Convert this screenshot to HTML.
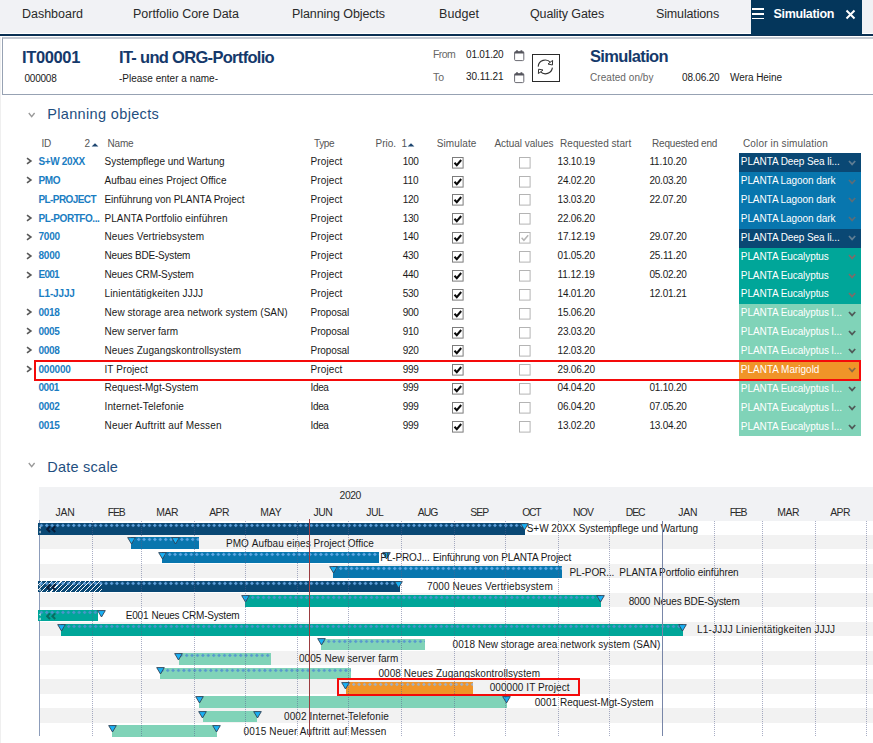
<!DOCTYPE html>
<html><head><meta charset="utf-8"><title>Simulation</title>
<style>
html,body{margin:0;padding:0;background:#fff;}
body{width:873px;height:743px;overflow:hidden;position:relative;font-family:"Liberation Sans",sans-serif;}
.t{position:absolute;white-space:nowrap;margin:0;padding:0;}
.r{position:absolute;margin:0;padding:0;display:block;}
</style></head><body>
<div class="r" style="left:0.00px;top:0.00px;width:873.00px;height:33.00px;background:#f1f2f5;"></div>
<div class="r" style="left:0.00px;top:34.00px;width:873.00px;height:2.00px;background:#0a3053;"></div>
<div class="t " style="left:22.00px;top:4.80px;font-size:12.5px;line-height:18px;color:#2a2a2a;letter-spacing:-0.017px;">Dashboard</div>
<div class="t " style="left:133.00px;top:4.80px;font-size:12.5px;line-height:18px;color:#2a2a2a;letter-spacing:-0.016px;">Portfolio Core Data</div>
<div class="t " style="left:292.00px;top:4.80px;font-size:12.5px;line-height:18px;color:#2a2a2a;letter-spacing:-0.094px;">Planning Objects</div>
<div class="t " style="left:439.00px;top:4.80px;font-size:12.5px;line-height:18px;color:#2a2a2a;letter-spacing:0.064px;">Budget</div>
<div class="t " style="left:530.00px;top:4.80px;font-size:12.5px;line-height:18px;color:#2a2a2a;letter-spacing:-0.133px;">Quality Gates</div>
<div class="t " style="left:656.00px;top:4.80px;font-size:12.5px;line-height:18px;color:#2a2a2a;letter-spacing:-0.147px;">Simulations</div>
<div class="r" style="left:750.60px;top:0.00px;width:111.40px;height:34.50px;background:#04365b;"></div>
<div class="r" style="left:751.50px;top:8.40px;width:12.50px;height:1.70px;background:#fff;"></div>
<div class="r" style="left:751.50px;top:13.00px;width:12.50px;height:1.70px;background:#fff;"></div>
<div class="r" style="left:751.50px;top:17.60px;width:12.50px;height:1.70px;background:#fff;"></div>
<div class="t " style="left:773.50px;top:4.80px;font-size:12.5px;line-height:18px;color:#fff;font-weight:bold;letter-spacing:-0.339px;">Simulation</div>
<svg class="r" style="left:845px;top:8.8px" width="11" height="11" viewBox="0 0 11 11"><path d="M1.5 1.5 L9.5 9.5 M9.5 1.5 L1.5 9.5" stroke="#fff" stroke-width="2" fill="none"/></svg>
<div class="r" style="left:0.00px;top:37.00px;width:1.00px;height:706.00px;background:#efefef;"></div>
<div class="r" style="left:2.00px;top:37.00px;width:873.00px;height:58.00px;background:#fff;border:1px solid #97a2b3;border-top:2px solid #c4c9d1;box-sizing:border-box;"></div>
<div class="t " style="left:22.00px;top:46.00px;font-size:16.5px;line-height:23px;color:#15396b;font-weight:bold;letter-spacing:-0.364px;">IT00001</div>
<div class="t " style="left:24.50px;top:72.00px;font-size:10px;line-height:14px;color:#1a1a1a;letter-spacing:-0.228px;">000008</div>
<div class="t " style="left:119.00px;top:46.00px;font-size:16.5px;line-height:23px;color:#15396b;font-weight:bold;letter-spacing:-0.693px;">IT- und ORG-Portfolio</div>
<div class="t " style="left:119.00px;top:72.00px;font-size:10px;line-height:14px;color:#1a1a1a;letter-spacing:0.003px;">-Please enter a name-</div>
<div class="t " style="left:433.00px;top:47.00px;font-size:10.5px;line-height:15px;color:#666;letter-spacing:-0.624px;">From</div>
<div class="t " style="left:433.00px;top:69.50px;font-size:10.5px;line-height:15px;color:#666;letter-spacing:-0.045px;">To</div>
<div class="t " style="left:466.00px;top:48.00px;font-size:10px;line-height:14px;color:#1a1a1a;letter-spacing:-0.178px;">01.01.20</div>
<div class="t " style="left:466.00px;top:69.60px;font-size:10px;line-height:14px;color:#1a1a1a;letter-spacing:-0.085px;">30.11.21</div>
<svg class="r" style="left:513.8px;top:49.6px" width="11" height="12" viewBox="0 0 11 12"><rect x="0.6" y="1.6" width="9.2" height="9" rx="1.2" fill="#fff" stroke="#6a6a72" stroke-width="1"/><path d="M0.6 2.6 H9.8" stroke="#55555d" stroke-width="1.8"/><path d="M3 0.3 V2 M7.4 0.3 V2" stroke="#55555d" stroke-width="1.8"/></svg>
<svg class="r" style="left:513.8px;top:71.6px" width="11" height="12" viewBox="0 0 11 12"><rect x="0.6" y="1.6" width="9.2" height="9" rx="1.2" fill="#fff" stroke="#6a6a72" stroke-width="1"/><path d="M0.6 2.6 H9.8" stroke="#55555d" stroke-width="1.8"/><path d="M3 0.3 V2 M7.4 0.3 V2" stroke="#55555d" stroke-width="1.8"/></svg>
<div class="r" style="left:532.00px;top:54.00px;width:28.00px;height:28.00px;background:#fff;border:1px solid #2a2a2a;box-sizing:border-box;"></div>
<svg class="r" style="left:536px;top:58px" width="20" height="20" viewBox="0 0 20 20"><path d="M2.2 8.6 A7 7 0 0 1 14.6 4.6" fill="none" stroke="#333" stroke-width="1.1"/><path d="M16.6 2.4 L16.4 7 L12 6 Z" fill="#fff" stroke="#333" stroke-width="1" stroke-linejoin="round"/><path d="M16.4 9.6 A7 7 0 0 1 4.4 13.6" fill="none" stroke="#333" stroke-width="1.1"/><path d="M2.4 15.6 L2.6 11.2 L7 12 Z" fill="#fff" stroke="#333" stroke-width="1" stroke-linejoin="round"/></svg>
<div class="t " style="left:590.00px;top:44.50px;font-size:16.5px;line-height:23px;color:#15396b;font-weight:bold;letter-spacing:-0.634px;">Simulation</div>
<div class="t " style="left:590.00px;top:71.00px;font-size:10px;line-height:14px;color:#666;letter-spacing:0.052px;">Created on/by</div>
<div class="t " style="left:682.00px;top:71.00px;font-size:10px;line-height:14px;color:#1a1a1a;letter-spacing:-0.178px;">08.06.20</div>
<div class="t " style="left:730.00px;top:71.00px;font-size:10px;line-height:14px;color:#1a1a1a;letter-spacing:-0.062px;">Wera Heine</div>
<svg class="r" style="left:28.2px;top:112.0px" width="8" height="7" viewBox="0 0 8 7"><path d="M0.8 1 L3.7 4.6 L6.6 1" fill="none" stroke="#9a9a9a" stroke-width="1.4"/></svg>
<div class="t " style="left:47.20px;top:103.60px;font-size:14.5px;line-height:20px;color:#1f4f80;letter-spacing:0.350px;">Planning objects</div>
<svg class="r" style="left:28.2px;top:462.2px" width="8" height="7" viewBox="0 0 8 7"><path d="M0.8 1 L3.7 4.6 L6.6 1" fill="none" stroke="#9a9a9a" stroke-width="1.4"/></svg>
<div class="t " style="left:47.20px;top:456.60px;font-size:14.5px;line-height:20px;color:#1f4f80;letter-spacing:0.249px;">Date scale</div>
<div class="t " style="left:41.40px;top:137.40px;font-size:10px;line-height:14px;color:#555;letter-spacing:-0.250px;">ID</div>
<div class="t " style="left:84.50px;top:137.40px;font-size:10px;line-height:14px;color:#555;">2</div>
<div class="t " style="left:107.50px;top:137.40px;font-size:10px;line-height:14px;color:#555;letter-spacing:-0.169px;">Name</div>
<div class="t " style="left:313.90px;top:137.40px;font-size:10px;line-height:14px;color:#555;letter-spacing:-0.295px;">Type</div>
<div class="t " style="left:375.60px;top:137.40px;font-size:10px;line-height:14px;color:#555;letter-spacing:-0.012px;">Prio.</div>
<div class="t " style="left:401.50px;top:137.40px;font-size:10px;line-height:14px;color:#555;">1</div>
<svg class="r" style="left:91px;top:141.6px" width="9" height="6" viewBox="0 0 9 6"><path d="M0.6 4.6 L4 1.2 L7.4 4.6 Z" fill="#1d4670"/></svg>
<svg class="r" style="left:407.3px;top:141.6px" width="9" height="6" viewBox="0 0 9 6"><path d="M0.6 4.6 L4 1.2 L7.4 4.6 Z" fill="#1d4670"/></svg>
<div class="t " style="left:436.80px;top:137.40px;font-size:10px;line-height:14px;color:#555;letter-spacing:0.087px;">Simulate</div>
<div class="t " style="left:494.40px;top:137.40px;font-size:10px;line-height:14px;color:#555;letter-spacing:-0.021px;">Actual values</div>
<div class="t " style="left:560.10px;top:137.40px;font-size:10px;line-height:14px;color:#555;letter-spacing:0.034px;">Requested start</div>
<div class="t " style="left:652.10px;top:137.40px;font-size:10px;line-height:14px;color:#555;letter-spacing:-0.218px;">Requested end</div>
<div class="t " style="left:743.00px;top:137.40px;font-size:10px;line-height:14px;color:#555;letter-spacing:0.144px;">Color in simulation</div>
<svg class="r" style="left:25.8px;top:157.30px" width="7" height="8" viewBox="0 0 7 8"><path d="M1 1.2 L4.9 4 L1 6.8" fill="none" stroke="#585858" stroke-width="1.6"/></svg>
<div class="t " style="left:38.50px;top:155.00px;font-size:10px;line-height:14px;color:#1a7dc2;font-weight:bold;letter-spacing:-0.361px;">S+W 20XX</div>
<div class="t " style="left:104.50px;top:155.00px;font-size:10px;line-height:14px;color:#1a1a1a;letter-spacing:-0.010px;">Systempflege und Wartung</div>
<div class="t " style="left:310.60px;top:155.00px;font-size:10px;line-height:14px;color:#1a1a1a;letter-spacing:0.090px;">Project</div>
<div class="t " style="left:402.80px;top:155.00px;font-size:10px;line-height:14px;color:#1a1a1a;letter-spacing:-0.362px;">100</div>
<svg class="r" style="left:451.7px;top:156.70px" width="12" height="12" viewBox="0 0 12 12"><rect x="0.5" y="0.5" width="10.6" height="10.6" fill="#fff" stroke="#7c7c7c" stroke-width="1"/><path d="M2.5 5.7 L4.8 8.2 L9.2 3.0" fill="none" stroke="#0a0a0a" stroke-width="2"/></svg>
<svg class="r" style="left:519px;top:156.70px" width="12" height="12" viewBox="0 0 12 12"><rect x="0.5" y="0.5" width="10.6" height="10.6" fill="#fff" stroke="#b4b4b4" stroke-width="1"/></svg>
<div class="t " style="left:557.60px;top:155.00px;font-size:10px;line-height:14px;color:#1a1a1a;letter-spacing:-0.216px;">13.10.19</div>
<div class="t " style="left:649.40px;top:155.00px;font-size:10px;line-height:14px;color:#1a1a1a;letter-spacing:-0.123px;">11.10.20</div>
<div class="r" style="left:739.20px;top:153.20px;width:121.70px;height:18.97px;background:#0a4874;"></div>
<div class="t " style="left:740.80px;top:155.40px;font-size:10px;line-height:14px;color:#fff;letter-spacing:-0.072px;">PLANTA Deep Sea li...</div>
<svg class="r" style="left:848.3px;top:159.70px" width="9" height="7" viewBox="0 0 9 7"><path d="M1 1 L4.1 4.4 L7.2 1" fill="none" stroke="#5f7d93" stroke-width="1.7"/></svg>
<svg class="r" style="left:25.8px;top:176.17px" width="7" height="8" viewBox="0 0 7 8"><path d="M1 1.2 L4.9 4 L1 6.8" fill="none" stroke="#585858" stroke-width="1.6"/></svg>
<div class="t " style="left:38.50px;top:173.87px;font-size:10px;line-height:14px;color:#1a7dc2;font-weight:bold;letter-spacing:-0.393px;">PMO</div>
<div class="t " style="left:104.50px;top:173.87px;font-size:10px;line-height:14px;color:#1a1a1a;letter-spacing:0.037px;">Aufbau eines Project Office</div>
<div class="t " style="left:310.60px;top:173.87px;font-size:10px;line-height:14px;color:#1a1a1a;letter-spacing:0.090px;">Project</div>
<div class="t " style="left:402.80px;top:173.87px;font-size:10px;line-height:14px;color:#1a1a1a;letter-spacing:-0.114px;">110</div>
<svg class="r" style="left:451.7px;top:175.57px" width="12" height="12" viewBox="0 0 12 12"><rect x="0.5" y="0.5" width="10.6" height="10.6" fill="#fff" stroke="#7c7c7c" stroke-width="1"/><path d="M2.5 5.7 L4.8 8.2 L9.2 3.0" fill="none" stroke="#0a0a0a" stroke-width="2"/></svg>
<svg class="r" style="left:519px;top:175.57px" width="12" height="12" viewBox="0 0 12 12"><rect x="0.5" y="0.5" width="10.6" height="10.6" fill="#fff" stroke="#b4b4b4" stroke-width="1"/></svg>
<div class="t " style="left:557.60px;top:173.87px;font-size:10px;line-height:14px;color:#1a1a1a;letter-spacing:-0.216px;">24.02.20</div>
<div class="t " style="left:649.40px;top:173.87px;font-size:10px;line-height:14px;color:#1a1a1a;letter-spacing:-0.216px;">20.03.20</div>
<div class="r" style="left:739.20px;top:172.07px;width:121.70px;height:18.97px;background:#0876ae;"></div>
<div class="t " style="left:740.80px;top:174.27px;font-size:10px;line-height:14px;color:#fff;letter-spacing:-0.080px;">PLANTA Lagoon dark</div>
<svg class="r" style="left:848.3px;top:178.57px" width="9" height="7" viewBox="0 0 9 7"><path d="M1 1 L4.1 4.4 L7.2 1" fill="none" stroke="#5b6d78" stroke-width="1.7"/></svg>
<div class="t " style="left:38.50px;top:192.74px;font-size:10px;line-height:14px;color:#1a7dc2;font-weight:bold;letter-spacing:-0.594px;">PL-PROJECT</div>
<div class="t " style="left:104.50px;top:192.74px;font-size:10px;line-height:14px;color:#1a1a1a;letter-spacing:-0.057px;">Einführung von PLANTA Project</div>
<div class="t " style="left:310.60px;top:192.74px;font-size:10px;line-height:14px;color:#1a1a1a;letter-spacing:0.090px;">Project</div>
<div class="t " style="left:402.80px;top:192.74px;font-size:10px;line-height:14px;color:#1a1a1a;letter-spacing:-0.362px;">120</div>
<svg class="r" style="left:451.7px;top:194.44px" width="12" height="12" viewBox="0 0 12 12"><rect x="0.5" y="0.5" width="10.6" height="10.6" fill="#fff" stroke="#7c7c7c" stroke-width="1"/><path d="M2.5 5.7 L4.8 8.2 L9.2 3.0" fill="none" stroke="#0a0a0a" stroke-width="2"/></svg>
<svg class="r" style="left:519px;top:194.44px" width="12" height="12" viewBox="0 0 12 12"><rect x="0.5" y="0.5" width="10.6" height="10.6" fill="#fff" stroke="#b4b4b4" stroke-width="1"/></svg>
<div class="t " style="left:557.60px;top:192.74px;font-size:10px;line-height:14px;color:#1a1a1a;letter-spacing:-0.216px;">13.03.20</div>
<div class="t " style="left:649.40px;top:192.74px;font-size:10px;line-height:14px;color:#1a1a1a;letter-spacing:-0.216px;">22.07.20</div>
<div class="r" style="left:739.20px;top:190.94px;width:121.70px;height:18.97px;background:#0876ae;"></div>
<div class="t " style="left:740.80px;top:193.14px;font-size:10px;line-height:14px;color:#fff;letter-spacing:-0.080px;">PLANTA Lagoon dark</div>
<svg class="r" style="left:848.3px;top:197.44px" width="9" height="7" viewBox="0 0 9 7"><path d="M1 1 L4.1 4.4 L7.2 1" fill="none" stroke="#5b6d78" stroke-width="1.7"/></svg>
<svg class="r" style="left:25.8px;top:213.91px" width="7" height="8" viewBox="0 0 7 8"><path d="M1 1.2 L4.9 4 L1 6.8" fill="none" stroke="#585858" stroke-width="1.6"/></svg>
<div class="t " style="left:38.50px;top:211.61px;font-size:10px;line-height:14px;color:#1a7dc2;font-weight:bold;letter-spacing:-0.434px;">PL-PORTFO...</div>
<div class="t " style="left:104.50px;top:211.61px;font-size:10px;line-height:14px;color:#1a1a1a;letter-spacing:0.056px;">PLANTA Portfolio einführen</div>
<div class="t " style="left:310.60px;top:211.61px;font-size:10px;line-height:14px;color:#1a1a1a;letter-spacing:0.090px;">Project</div>
<div class="t " style="left:402.80px;top:211.61px;font-size:10px;line-height:14px;color:#1a1a1a;letter-spacing:-0.362px;">130</div>
<svg class="r" style="left:451.7px;top:213.31px" width="12" height="12" viewBox="0 0 12 12"><rect x="0.5" y="0.5" width="10.6" height="10.6" fill="#fff" stroke="#7c7c7c" stroke-width="1"/><path d="M2.5 5.7 L4.8 8.2 L9.2 3.0" fill="none" stroke="#0a0a0a" stroke-width="2"/></svg>
<svg class="r" style="left:519px;top:213.31px" width="12" height="12" viewBox="0 0 12 12"><rect x="0.5" y="0.5" width="10.6" height="10.6" fill="#fff" stroke="#b4b4b4" stroke-width="1"/></svg>
<div class="t " style="left:557.60px;top:211.61px;font-size:10px;line-height:14px;color:#1a1a1a;letter-spacing:-0.216px;">22.06.20</div>
<div class="r" style="left:739.20px;top:209.81px;width:121.70px;height:18.97px;background:#0876ae;"></div>
<div class="t " style="left:740.80px;top:212.01px;font-size:10px;line-height:14px;color:#fff;letter-spacing:-0.080px;">PLANTA Lagoon dark</div>
<svg class="r" style="left:848.3px;top:216.31px" width="9" height="7" viewBox="0 0 9 7"><path d="M1 1 L4.1 4.4 L7.2 1" fill="none" stroke="#5b6d78" stroke-width="1.7"/></svg>
<svg class="r" style="left:25.8px;top:232.78px" width="7" height="8" viewBox="0 0 7 8"><path d="M1 1.2 L4.9 4 L1 6.8" fill="none" stroke="#585858" stroke-width="1.6"/></svg>
<div class="t " style="left:38.50px;top:230.48px;font-size:10px;line-height:14px;color:#1a7dc2;font-weight:bold;letter-spacing:-0.237px;">7000</div>
<div class="t " style="left:104.50px;top:230.48px;font-size:10px;line-height:14px;color:#1a1a1a;letter-spacing:0.089px;">Neues Vertriebsystem</div>
<div class="t " style="left:310.60px;top:230.48px;font-size:10px;line-height:14px;color:#1a1a1a;letter-spacing:0.090px;">Project</div>
<div class="t " style="left:402.80px;top:230.48px;font-size:10px;line-height:14px;color:#1a1a1a;letter-spacing:-0.362px;">140</div>
<svg class="r" style="left:451.7px;top:232.18px" width="12" height="12" viewBox="0 0 12 12"><rect x="0.5" y="0.5" width="10.6" height="10.6" fill="#fff" stroke="#7c7c7c" stroke-width="1"/><path d="M2.5 5.7 L4.8 8.2 L9.2 3.0" fill="none" stroke="#0a0a0a" stroke-width="2"/></svg>
<svg class="r" style="left:519px;top:232.18px" width="12" height="12" viewBox="0 0 12 12"><rect x="0.5" y="0.5" width="10.6" height="10.6" fill="#fff" stroke="#b4b4b4" stroke-width="1"/><path d="M2.6 5.8 L4.9 8.3 L9.2 3.2" fill="none" stroke="#b5b5b5" stroke-width="1.5"/></svg>
<div class="t " style="left:557.60px;top:230.48px;font-size:10px;line-height:14px;color:#1a1a1a;letter-spacing:-0.216px;">17.12.19</div>
<div class="t " style="left:649.40px;top:230.48px;font-size:10px;line-height:14px;color:#1a1a1a;letter-spacing:-0.216px;">29.07.20</div>
<div class="r" style="left:739.20px;top:228.68px;width:121.70px;height:18.97px;background:#0a4874;"></div>
<div class="t " style="left:740.80px;top:230.88px;font-size:10px;line-height:14px;color:#fff;letter-spacing:-0.072px;">PLANTA Deep Sea li...</div>
<svg class="r" style="left:848.3px;top:235.18px" width="9" height="7" viewBox="0 0 9 7"><path d="M1 1 L4.1 4.4 L7.2 1" fill="none" stroke="#5f7d93" stroke-width="1.7"/></svg>
<svg class="r" style="left:25.8px;top:251.65px" width="7" height="8" viewBox="0 0 7 8"><path d="M1 1.2 L4.9 4 L1 6.8" fill="none" stroke="#585858" stroke-width="1.6"/></svg>
<div class="t " style="left:38.50px;top:249.35px;font-size:10px;line-height:14px;color:#1a7dc2;font-weight:bold;letter-spacing:-0.237px;">8000</div>
<div class="t " style="left:104.50px;top:249.35px;font-size:10px;line-height:14px;color:#1a1a1a;letter-spacing:-0.201px;">Neues BDE-System</div>
<div class="t " style="left:310.60px;top:249.35px;font-size:10px;line-height:14px;color:#1a1a1a;letter-spacing:0.090px;">Project</div>
<div class="t " style="left:402.80px;top:249.35px;font-size:10px;line-height:14px;color:#1a1a1a;letter-spacing:-0.362px;">430</div>
<svg class="r" style="left:451.7px;top:251.05px" width="12" height="12" viewBox="0 0 12 12"><rect x="0.5" y="0.5" width="10.6" height="10.6" fill="#fff" stroke="#7c7c7c" stroke-width="1"/><path d="M2.5 5.7 L4.8 8.2 L9.2 3.0" fill="none" stroke="#0a0a0a" stroke-width="2"/></svg>
<svg class="r" style="left:519px;top:251.05px" width="12" height="12" viewBox="0 0 12 12"><rect x="0.5" y="0.5" width="10.6" height="10.6" fill="#fff" stroke="#b4b4b4" stroke-width="1"/></svg>
<div class="t " style="left:557.60px;top:249.35px;font-size:10px;line-height:14px;color:#1a1a1a;letter-spacing:-0.216px;">01.05.20</div>
<div class="t " style="left:649.40px;top:249.35px;font-size:10px;line-height:14px;color:#1a1a1a;letter-spacing:-0.123px;">25.11.20</div>
<div class="r" style="left:739.20px;top:247.55px;width:121.70px;height:18.97px;background:#00a699;"></div>
<div class="t " style="left:740.80px;top:249.75px;font-size:10px;line-height:14px;color:#fff;letter-spacing:-0.079px;">PLANTA Eucalyptus</div>
<svg class="r" style="left:848.3px;top:254.05px" width="9" height="7" viewBox="0 0 9 7"><path d="M1 1 L4.1 4.4 L7.2 1" fill="none" stroke="#7a6d6a" stroke-width="1.7"/></svg>
<svg class="r" style="left:25.8px;top:270.52px" width="7" height="8" viewBox="0 0 7 8"><path d="M1 1.2 L4.9 4 L1 6.8" fill="none" stroke="#585858" stroke-width="1.6"/></svg>
<div class="t " style="left:38.50px;top:268.22px;font-size:10px;line-height:14px;color:#1a7dc2;font-weight:bold;letter-spacing:-0.764px;">E001</div>
<div class="t " style="left:104.50px;top:268.22px;font-size:10px;line-height:14px;color:#1a1a1a;letter-spacing:-0.117px;">Neues CRM-System</div>
<div class="t " style="left:310.60px;top:268.22px;font-size:10px;line-height:14px;color:#1a1a1a;letter-spacing:0.090px;">Project</div>
<div class="t " style="left:402.80px;top:268.22px;font-size:10px;line-height:14px;color:#1a1a1a;letter-spacing:-0.362px;">440</div>
<svg class="r" style="left:451.7px;top:269.92px" width="12" height="12" viewBox="0 0 12 12"><rect x="0.5" y="0.5" width="10.6" height="10.6" fill="#fff" stroke="#7c7c7c" stroke-width="1"/><path d="M2.5 5.7 L4.8 8.2 L9.2 3.0" fill="none" stroke="#0a0a0a" stroke-width="2"/></svg>
<svg class="r" style="left:519px;top:269.92px" width="12" height="12" viewBox="0 0 12 12"><rect x="0.5" y="0.5" width="10.6" height="10.6" fill="#fff" stroke="#b4b4b4" stroke-width="1"/></svg>
<div class="t " style="left:557.60px;top:268.22px;font-size:10px;line-height:14px;color:#1a1a1a;letter-spacing:-0.123px;">11.12.19</div>
<div class="t " style="left:649.40px;top:268.22px;font-size:10px;line-height:14px;color:#1a1a1a;letter-spacing:-0.216px;">05.02.20</div>
<div class="r" style="left:739.20px;top:266.42px;width:121.70px;height:18.97px;background:#00a699;"></div>
<div class="t " style="left:740.80px;top:268.62px;font-size:10px;line-height:14px;color:#fff;letter-spacing:-0.079px;">PLANTA Eucalyptus</div>
<svg class="r" style="left:848.3px;top:272.92px" width="9" height="7" viewBox="0 0 9 7"><path d="M1 1 L4.1 4.4 L7.2 1" fill="none" stroke="#7a6d6a" stroke-width="1.7"/></svg>
<div class="t " style="left:38.50px;top:287.09px;font-size:10px;line-height:14px;color:#1a7dc2;font-weight:bold;letter-spacing:-0.135px;">L1-JJJJ</div>
<div class="t " style="left:104.50px;top:287.09px;font-size:10px;line-height:14px;color:#1a1a1a;letter-spacing:0.170px;">Linientätigkeiten JJJJ</div>
<div class="t " style="left:310.60px;top:287.09px;font-size:10px;line-height:14px;color:#1a1a1a;letter-spacing:0.090px;">Project</div>
<div class="t " style="left:402.80px;top:287.09px;font-size:10px;line-height:14px;color:#1a1a1a;letter-spacing:-0.362px;">530</div>
<svg class="r" style="left:451.7px;top:288.79px" width="12" height="12" viewBox="0 0 12 12"><rect x="0.5" y="0.5" width="10.6" height="10.6" fill="#fff" stroke="#7c7c7c" stroke-width="1"/><path d="M2.5 5.7 L4.8 8.2 L9.2 3.0" fill="none" stroke="#0a0a0a" stroke-width="2"/></svg>
<svg class="r" style="left:519px;top:288.79px" width="12" height="12" viewBox="0 0 12 12"><rect x="0.5" y="0.5" width="10.6" height="10.6" fill="#fff" stroke="#b4b4b4" stroke-width="1"/></svg>
<div class="t " style="left:557.60px;top:287.09px;font-size:10px;line-height:14px;color:#1a1a1a;letter-spacing:-0.216px;">14.01.20</div>
<div class="t " style="left:649.40px;top:287.09px;font-size:10px;line-height:14px;color:#1a1a1a;letter-spacing:-0.216px;">12.01.21</div>
<div class="r" style="left:739.20px;top:285.29px;width:121.70px;height:18.97px;background:#00a699;"></div>
<div class="t " style="left:740.80px;top:287.49px;font-size:10px;line-height:14px;color:#fff;letter-spacing:-0.079px;">PLANTA Eucalyptus</div>
<svg class="r" style="left:848.3px;top:291.79px" width="9" height="7" viewBox="0 0 9 7"><path d="M1 1 L4.1 4.4 L7.2 1" fill="none" stroke="#7a6d6a" stroke-width="1.7"/></svg>
<svg class="r" style="left:25.8px;top:308.26px" width="7" height="8" viewBox="0 0 7 8"><path d="M1 1.2 L4.9 4 L1 6.8" fill="none" stroke="#585858" stroke-width="1.6"/></svg>
<div class="t " style="left:38.50px;top:305.96px;font-size:10px;line-height:14px;color:#1a7dc2;font-weight:bold;letter-spacing:-0.287px;">0018</div>
<div class="t " style="left:104.50px;top:305.96px;font-size:10px;line-height:14px;color:#1a1a1a;letter-spacing:0.056px;">New storage area network system (SAN)</div>
<div class="t " style="left:310.60px;top:305.96px;font-size:10px;line-height:14px;color:#1a1a1a;letter-spacing:-0.121px;">Proposal</div>
<div class="t " style="left:402.80px;top:305.96px;font-size:10px;line-height:14px;color:#1a1a1a;letter-spacing:-0.362px;">900</div>
<svg class="r" style="left:451.7px;top:307.66px" width="12" height="12" viewBox="0 0 12 12"><rect x="0.5" y="0.5" width="10.6" height="10.6" fill="#fff" stroke="#7c7c7c" stroke-width="1"/><path d="M2.5 5.7 L4.8 8.2 L9.2 3.0" fill="none" stroke="#0a0a0a" stroke-width="2"/></svg>
<svg class="r" style="left:519px;top:307.66px" width="12" height="12" viewBox="0 0 12 12"><rect x="0.5" y="0.5" width="10.6" height="10.6" fill="#fff" stroke="#b4b4b4" stroke-width="1"/></svg>
<div class="t " style="left:557.60px;top:305.96px;font-size:10px;line-height:14px;color:#1a1a1a;letter-spacing:-0.216px;">15.06.20</div>
<div class="r" style="left:739.20px;top:304.16px;width:121.70px;height:18.97px;background:#80d3b8;"></div>
<div class="t " style="left:740.80px;top:306.36px;font-size:10px;line-height:14px;color:#fff;letter-spacing:-0.070px;">PLANTA Eucalyptus l...</div>
<svg class="r" style="left:848.3px;top:310.66px" width="9" height="7" viewBox="0 0 9 7"><path d="M1 1 L4.1 4.4 L7.2 1" fill="none" stroke="#4f5a58" stroke-width="1.7"/></svg>
<svg class="r" style="left:25.8px;top:327.13px" width="7" height="8" viewBox="0 0 7 8"><path d="M1 1.2 L4.9 4 L1 6.8" fill="none" stroke="#585858" stroke-width="1.6"/></svg>
<div class="t " style="left:38.50px;top:324.83px;font-size:10px;line-height:14px;color:#1a7dc2;font-weight:bold;letter-spacing:-0.287px;">0005</div>
<div class="t " style="left:104.50px;top:324.83px;font-size:10px;line-height:14px;color:#1a1a1a;letter-spacing:0.017px;">New server farm</div>
<div class="t " style="left:310.60px;top:324.83px;font-size:10px;line-height:14px;color:#1a1a1a;letter-spacing:-0.121px;">Proposal</div>
<div class="t " style="left:402.80px;top:324.83px;font-size:10px;line-height:14px;color:#1a1a1a;letter-spacing:-0.362px;">910</div>
<svg class="r" style="left:451.7px;top:326.53px" width="12" height="12" viewBox="0 0 12 12"><rect x="0.5" y="0.5" width="10.6" height="10.6" fill="#fff" stroke="#7c7c7c" stroke-width="1"/><path d="M2.5 5.7 L4.8 8.2 L9.2 3.0" fill="none" stroke="#0a0a0a" stroke-width="2"/></svg>
<svg class="r" style="left:519px;top:326.53px" width="12" height="12" viewBox="0 0 12 12"><rect x="0.5" y="0.5" width="10.6" height="10.6" fill="#fff" stroke="#b4b4b4" stroke-width="1"/></svg>
<div class="t " style="left:557.60px;top:324.83px;font-size:10px;line-height:14px;color:#1a1a1a;letter-spacing:-0.216px;">23.03.20</div>
<div class="r" style="left:739.20px;top:323.03px;width:121.70px;height:18.97px;background:#80d3b8;"></div>
<div class="t " style="left:740.80px;top:325.23px;font-size:10px;line-height:14px;color:#fff;letter-spacing:-0.070px;">PLANTA Eucalyptus l...</div>
<svg class="r" style="left:848.3px;top:329.53px" width="9" height="7" viewBox="0 0 9 7"><path d="M1 1 L4.1 4.4 L7.2 1" fill="none" stroke="#4f5a58" stroke-width="1.7"/></svg>
<svg class="r" style="left:25.8px;top:346.00px" width="7" height="8" viewBox="0 0 7 8"><path d="M1 1.2 L4.9 4 L1 6.8" fill="none" stroke="#585858" stroke-width="1.6"/></svg>
<div class="t " style="left:38.50px;top:343.70px;font-size:10px;line-height:14px;color:#1a7dc2;font-weight:bold;letter-spacing:-0.287px;">0008</div>
<div class="t " style="left:104.50px;top:343.70px;font-size:10px;line-height:14px;color:#1a1a1a;letter-spacing:0.078px;">Neues Zugangskontrollsystem</div>
<div class="t " style="left:310.60px;top:343.70px;font-size:10px;line-height:14px;color:#1a1a1a;letter-spacing:-0.121px;">Proposal</div>
<div class="t " style="left:402.80px;top:343.70px;font-size:10px;line-height:14px;color:#1a1a1a;letter-spacing:-0.362px;">920</div>
<svg class="r" style="left:451.7px;top:345.40px" width="12" height="12" viewBox="0 0 12 12"><rect x="0.5" y="0.5" width="10.6" height="10.6" fill="#fff" stroke="#7c7c7c" stroke-width="1"/><path d="M2.5 5.7 L4.8 8.2 L9.2 3.0" fill="none" stroke="#0a0a0a" stroke-width="2"/></svg>
<svg class="r" style="left:519px;top:345.40px" width="12" height="12" viewBox="0 0 12 12"><rect x="0.5" y="0.5" width="10.6" height="10.6" fill="#fff" stroke="#b4b4b4" stroke-width="1"/></svg>
<div class="t " style="left:557.60px;top:343.70px;font-size:10px;line-height:14px;color:#1a1a1a;letter-spacing:-0.216px;">12.03.20</div>
<div class="r" style="left:739.20px;top:341.90px;width:121.70px;height:18.97px;background:#80d3b8;"></div>
<div class="t " style="left:740.80px;top:344.10px;font-size:10px;line-height:14px;color:#fff;letter-spacing:-0.070px;">PLANTA Eucalyptus l...</div>
<svg class="r" style="left:848.3px;top:348.40px" width="9" height="7" viewBox="0 0 9 7"><path d="M1 1 L4.1 4.4 L7.2 1" fill="none" stroke="#4f5a58" stroke-width="1.7"/></svg>
<svg class="r" style="left:25.8px;top:364.87px" width="7" height="8" viewBox="0 0 7 8"><path d="M1 1.2 L4.9 4 L1 6.8" fill="none" stroke="#585858" stroke-width="1.6"/></svg>
<div class="t " style="left:38.50px;top:362.57px;font-size:10px;line-height:14px;color:#1a7dc2;font-weight:bold;letter-spacing:-0.195px;">000000</div>
<div class="t " style="left:104.50px;top:362.57px;font-size:10px;line-height:14px;color:#1a1a1a;letter-spacing:0.079px;">IT Project</div>
<div class="t " style="left:310.60px;top:362.57px;font-size:10px;line-height:14px;color:#1a1a1a;letter-spacing:0.090px;">Project</div>
<div class="t " style="left:402.80px;top:362.57px;font-size:10px;line-height:14px;color:#1a1a1a;letter-spacing:-0.362px;">999</div>
<svg class="r" style="left:451.7px;top:364.27px" width="12" height="12" viewBox="0 0 12 12"><rect x="0.5" y="0.5" width="10.6" height="10.6" fill="#fff" stroke="#7c7c7c" stroke-width="1"/><path d="M2.5 5.7 L4.8 8.2 L9.2 3.0" fill="none" stroke="#0a0a0a" stroke-width="2"/></svg>
<svg class="r" style="left:519px;top:364.27px" width="12" height="12" viewBox="0 0 12 12"><rect x="0.5" y="0.5" width="10.6" height="10.6" fill="#fff" stroke="#b4b4b4" stroke-width="1"/></svg>
<div class="t " style="left:557.60px;top:362.57px;font-size:10px;line-height:14px;color:#1a1a1a;letter-spacing:-0.216px;">29.06.20</div>
<div class="r" style="left:739.20px;top:360.77px;width:121.70px;height:18.97px;background:#f09428;"></div>
<div class="t " style="left:740.80px;top:362.97px;font-size:10px;line-height:14px;color:#fff;letter-spacing:-0.009px;">PLANTA Marigold</div>
<svg class="r" style="left:848.3px;top:367.27px" width="9" height="7" viewBox="0 0 9 7"><path d="M1 1 L4.1 4.4 L7.2 1" fill="none" stroke="#8a6a45" stroke-width="1.7"/></svg>
<div class="t " style="left:38.50px;top:381.44px;font-size:10px;line-height:14px;color:#1a7dc2;font-weight:bold;letter-spacing:-0.462px;">0001</div>
<div class="t " style="left:104.50px;top:381.44px;font-size:10px;line-height:14px;color:#1a1a1a;letter-spacing:-0.006px;">Request-Mgt-System</div>
<div class="t " style="left:310.60px;top:381.44px;font-size:10px;line-height:14px;color:#1a1a1a;letter-spacing:-0.391px;">Idea</div>
<div class="t " style="left:402.80px;top:381.44px;font-size:10px;line-height:14px;color:#1a1a1a;letter-spacing:-0.362px;">999</div>
<svg class="r" style="left:451.7px;top:383.14px" width="12" height="12" viewBox="0 0 12 12"><rect x="0.5" y="0.5" width="10.6" height="10.6" fill="#fff" stroke="#7c7c7c" stroke-width="1"/><path d="M2.5 5.7 L4.8 8.2 L9.2 3.0" fill="none" stroke="#0a0a0a" stroke-width="2"/></svg>
<svg class="r" style="left:519px;top:383.14px" width="12" height="12" viewBox="0 0 12 12"><rect x="0.5" y="0.5" width="10.6" height="10.6" fill="#fff" stroke="#b4b4b4" stroke-width="1"/></svg>
<div class="t " style="left:557.60px;top:381.44px;font-size:10px;line-height:14px;color:#1a1a1a;letter-spacing:-0.216px;">04.04.20</div>
<div class="t " style="left:649.40px;top:381.44px;font-size:10px;line-height:14px;color:#1a1a1a;letter-spacing:-0.216px;">01.10.20</div>
<div class="r" style="left:739.20px;top:379.64px;width:121.70px;height:18.97px;background:#80d3b8;"></div>
<div class="t " style="left:740.80px;top:381.84px;font-size:10px;line-height:14px;color:#fff;letter-spacing:-0.070px;">PLANTA Eucalyptus l...</div>
<svg class="r" style="left:848.3px;top:386.14px" width="9" height="7" viewBox="0 0 9 7"><path d="M1 1 L4.1 4.4 L7.2 1" fill="none" stroke="#4f5a58" stroke-width="1.7"/></svg>
<div class="t " style="left:38.50px;top:400.31px;font-size:10px;line-height:14px;color:#1a7dc2;font-weight:bold;letter-spacing:-0.287px;">0002</div>
<div class="t " style="left:104.50px;top:400.31px;font-size:10px;line-height:14px;color:#1a1a1a;letter-spacing:0.118px;">Internet-Telefonie</div>
<div class="t " style="left:310.60px;top:400.31px;font-size:10px;line-height:14px;color:#1a1a1a;letter-spacing:-0.391px;">Idea</div>
<div class="t " style="left:402.80px;top:400.31px;font-size:10px;line-height:14px;color:#1a1a1a;letter-spacing:-0.362px;">999</div>
<svg class="r" style="left:451.7px;top:402.01px" width="12" height="12" viewBox="0 0 12 12"><rect x="0.5" y="0.5" width="10.6" height="10.6" fill="#fff" stroke="#7c7c7c" stroke-width="1"/><path d="M2.5 5.7 L4.8 8.2 L9.2 3.0" fill="none" stroke="#0a0a0a" stroke-width="2"/></svg>
<svg class="r" style="left:519px;top:402.01px" width="12" height="12" viewBox="0 0 12 12"><rect x="0.5" y="0.5" width="10.6" height="10.6" fill="#fff" stroke="#b4b4b4" stroke-width="1"/></svg>
<div class="t " style="left:557.60px;top:400.31px;font-size:10px;line-height:14px;color:#1a1a1a;letter-spacing:-0.216px;">06.04.20</div>
<div class="t " style="left:649.40px;top:400.31px;font-size:10px;line-height:14px;color:#1a1a1a;letter-spacing:-0.216px;">07.05.20</div>
<div class="r" style="left:739.20px;top:398.51px;width:121.70px;height:18.97px;background:#80d3b8;"></div>
<div class="t " style="left:740.80px;top:400.71px;font-size:10px;line-height:14px;color:#fff;letter-spacing:-0.070px;">PLANTA Eucalyptus l...</div>
<svg class="r" style="left:848.3px;top:405.01px" width="9" height="7" viewBox="0 0 9 7"><path d="M1 1 L4.1 4.4 L7.2 1" fill="none" stroke="#4f5a58" stroke-width="1.7"/></svg>
<div class="t " style="left:38.50px;top:419.18px;font-size:10px;line-height:14px;color:#1a7dc2;font-weight:bold;letter-spacing:-0.287px;">0015</div>
<div class="t " style="left:104.50px;top:419.18px;font-size:10px;line-height:14px;color:#1a1a1a;letter-spacing:0.175px;">Neuer Auftritt auf Messen</div>
<div class="t " style="left:310.60px;top:419.18px;font-size:10px;line-height:14px;color:#1a1a1a;letter-spacing:-0.391px;">Idea</div>
<div class="t " style="left:402.80px;top:419.18px;font-size:10px;line-height:14px;color:#1a1a1a;letter-spacing:-0.362px;">999</div>
<svg class="r" style="left:451.7px;top:420.88px" width="12" height="12" viewBox="0 0 12 12"><rect x="0.5" y="0.5" width="10.6" height="10.6" fill="#fff" stroke="#7c7c7c" stroke-width="1"/><path d="M2.5 5.7 L4.8 8.2 L9.2 3.0" fill="none" stroke="#0a0a0a" stroke-width="2"/></svg>
<svg class="r" style="left:519px;top:420.88px" width="12" height="12" viewBox="0 0 12 12"><rect x="0.5" y="0.5" width="10.6" height="10.6" fill="#fff" stroke="#b4b4b4" stroke-width="1"/></svg>
<div class="t " style="left:557.60px;top:419.18px;font-size:10px;line-height:14px;color:#1a1a1a;letter-spacing:-0.216px;">13.02.20</div>
<div class="t " style="left:649.40px;top:419.18px;font-size:10px;line-height:14px;color:#1a1a1a;letter-spacing:-0.216px;">13.04.20</div>
<div class="r" style="left:739.20px;top:417.38px;width:121.70px;height:18.97px;background:#80d3b8;"></div>
<div class="t " style="left:740.80px;top:419.58px;font-size:10px;line-height:14px;color:#fff;letter-spacing:-0.070px;">PLANTA Eucalyptus l...</div>
<svg class="r" style="left:848.3px;top:423.88px" width="9" height="7" viewBox="0 0 9 7"><path d="M1 1 L4.1 4.4 L7.2 1" fill="none" stroke="#4f5a58" stroke-width="1.7"/></svg>
<div class="r" style="left:33.90px;top:360.00px;width:826.80px;height:20.50px;background:transparent;border:2px solid #f40a0a;box-sizing:border-box;"></div>
<div class="r" style="left:39.00px;top:486.50px;width:834.00px;height:34.80px;background:#f1f2f4;"></div>
<div class="t " style="left:339.60px;top:487.90px;font-size:10.4px;line-height:15px;color:#2a2a2a;letter-spacing:-0.484px;">2020</div>
<div class="t " style="left:55.57px;top:504.70px;font-size:10.4px;line-height:15px;color:#2a2a2a;letter-spacing:-0.216px;">JAN</div>
<div class="t " style="left:107.86px;top:504.70px;font-size:10.4px;line-height:15px;color:#2a2a2a;letter-spacing:-1.242px;">FEB</div>
<div class="t " style="left:156.16px;top:504.70px;font-size:10.4px;line-height:15px;color:#2a2a2a;letter-spacing:-0.370px;">MAR</div>
<div class="t " style="left:209.30px;top:504.70px;font-size:10.4px;line-height:15px;color:#2a2a2a;letter-spacing:-0.628px;">APR</div>
<div class="t " style="left:260.19px;top:504.70px;font-size:10.4px;line-height:15px;color:#2a2a2a;letter-spacing:-0.088px;">MAY</div>
<div class="t " style="left:313.58px;top:504.70px;font-size:10.4px;line-height:15px;color:#2a2a2a;letter-spacing:-0.574px;">JUN</div>
<div class="t " style="left:366.23px;top:504.70px;font-size:10.4px;line-height:15px;color:#2a2a2a;letter-spacing:-0.498px;">JUL</div>
<div class="t " style="left:417.72px;top:504.70px;font-size:10.4px;line-height:15px;color:#2a2a2a;letter-spacing:-1.012px;">AUG</div>
<div class="t " style="left:470.36px;top:504.70px;font-size:10.4px;line-height:15px;color:#2a2a2a;letter-spacing:-0.937px;">SEP</div>
<div class="t " style="left:522.26px;top:504.70px;font-size:10.4px;line-height:15px;color:#2a2a2a;letter-spacing:-1.318px;">OCT</div>
<div class="t " style="left:572.90px;top:504.70px;font-size:10.4px;line-height:15px;color:#2a2a2a;letter-spacing:-0.679px;">NOV</div>
<div class="t " style="left:625.79px;top:504.70px;font-size:10.4px;line-height:15px;color:#2a2a2a;letter-spacing:-1.153px;">DEC</div>
<div class="t " style="left:678.28px;top:504.70px;font-size:10.4px;line-height:15px;color:#2a2a2a;letter-spacing:-0.216px;">JAN</div>
<div class="t " style="left:729.73px;top:504.70px;font-size:10.4px;line-height:15px;color:#2a2a2a;letter-spacing:-1.242px;">FEB</div>
<div class="t " style="left:777.17px;top:504.70px;font-size:10.4px;line-height:15px;color:#2a2a2a;letter-spacing:-0.370px;">MAR</div>
<div class="t " style="left:830.31px;top:504.70px;font-size:10.4px;line-height:15px;color:#2a2a2a;letter-spacing:-0.628px;">APR</div>
<div class="r" style="left:39.00px;top:534.90px;width:834.00px;height:14.45px;background:#f2f2f2;"></div>
<div class="r" style="left:39.00px;top:563.80px;width:834.00px;height:14.45px;background:#f2f2f2;"></div>
<div class="r" style="left:39.00px;top:592.70px;width:834.00px;height:14.45px;background:#f2f2f2;"></div>
<div class="r" style="left:39.00px;top:621.60px;width:834.00px;height:14.45px;background:#f2f2f2;"></div>
<div class="r" style="left:39.00px;top:650.50px;width:834.00px;height:14.45px;background:#f2f2f2;"></div>
<div class="r" style="left:39.00px;top:679.40px;width:834.00px;height:14.45px;background:#f2f2f2;"></div>
<div class="r" style="left:39.00px;top:708.30px;width:834.00px;height:14.45px;background:#f2f2f2;"></div>
<div class="r" style="left:39.10px;top:520.30px;width:1.00px;height:215.70px;background:#8c9cba;"></div>
<div class="r" style="left:38.30px;top:522.70px;width:486.80px;height:11.90px;background:#0a4874;"></div>
<svg class="r" style="left:38.30px;top:522.70px" width="486.80" height="5"><defs><pattern id="p0" x="0.8" y="0" width="5.4" height="5" patternUnits="userSpaceOnUse"><path d="M2.6 0.6 L4.4 2.4 L2.6 4.2 L0.8 2.4 Z" fill="rgba(112,178,240,0.85)"/></pattern></defs><rect width="100%" height="5" fill="url(#p0)"/></svg>
<svg class="r" style="left:46px;top:525.70px" width="11" height="7" viewBox="0 0 11 7"><path d="M4 0.4 L1.2 3.2 L4 6 M9.2 0.4 L6.4 3.2 L9.2 6" fill="none" stroke="#081c38" stroke-width="2"/></svg>
<svg class="r" style="left:38.80px;top:525.70px" width="3" height="8" viewBox="0 0 3 8"><path d="M0 1.5 L1.6 0 V3 Z M0 6 L1.6 4.5 V7.5 Z" fill="#e8eef4"/></svg>
<svg class="r" style="left:519.60px;top:522.80px" width="9" height="8" viewBox="0 0 9 8"><path d="M0.7 0.6 H8.3 L4.5 7.0 Z" fill="#18b0f4" stroke="#2f4256" stroke-width="0.9" stroke-linejoin="round"/></svg>
<div class="t" style="left:526.70px;top:522.30px;font-size:10px;line-height:14px;color:#1a1a1a;letter-spacing:-0.036px;">S+W 20XX<span style="margin-left:3.04px">Systempflege und Wartung</span></div>
<div class="r" style="left:130.98px;top:537.45px;width:68.22px;height:11.60px;background:#0876ae;"></div>
<svg class="r" style="left:130.98px;top:537.45px" width="68.22" height="5"><defs><pattern id="p1" x="-0.3" y="0" width="5.4" height="5" patternUnits="userSpaceOnUse"><path d="M2.6 0.6 L4.4 2.4 L2.6 4.2 L0.8 2.4 Z" fill="rgba(112,178,240,0.85)"/></pattern></defs><rect width="100%" height="5" fill="url(#p1)"/></svg>
<svg class="r" style="left:127.08px;top:537.25px" width="9" height="8" viewBox="0 0 9 8"><path d="M0.7 0.6 H8.3 L4.5 7.0 Z" fill="#18b0f4" stroke="#2f4256" stroke-width="0.9" stroke-linejoin="round"/></svg>
<svg class="r" style="left:171.11px;top:537.25px" width="9" height="8" viewBox="0 0 9 8"><path d="M0.7 0.6 H8.3 L4.5 7.0 Z" fill="#18b0f4" stroke="#2f4256" stroke-width="0.9" stroke-linejoin="round"/></svg>
<div class="t" style="left:226.00px;top:536.75px;font-size:10px;line-height:14px;color:#1a1a1a;letter-spacing:0.041px;">PMO<span style="margin-left:2.96px">Aufbau eines Project Office</span></div>
<div class="r" style="left:162.20px;top:551.90px;width:216.80px;height:11.60px;background:#0876ae;"></div>
<svg class="r" style="left:162.20px;top:551.90px" width="216.80" height="5"><defs><pattern id="p2" x="-0.3" y="0" width="5.4" height="5" patternUnits="userSpaceOnUse"><path d="M2.6 0.6 L4.4 2.4 L2.6 4.2 L0.8 2.4 Z" fill="rgba(112,178,240,0.85)"/></pattern></defs><rect width="100%" height="5" fill="url(#p2)"/></svg>
<svg class="r" style="left:157.80px;top:551.70px" width="9" height="8" viewBox="0 0 9 8"><path d="M0.7 0.6 H8.3 L4.5 7.0 Z" fill="#18b0f4" stroke="#2f4256" stroke-width="0.9" stroke-linejoin="round"/></svg>
<svg class="r" style="left:381.59px;top:551.70px" width="9" height="8" viewBox="0 0 9 8"><path d="M0.7 0.6 H8.3 L4.5 7.0 Z" fill="#18b0f4" stroke="#2f4256" stroke-width="0.9" stroke-linejoin="round"/></svg>
<div class="t" style="left:380.20px;top:551.20px;font-size:10px;line-height:14px;color:#1a1a1a;letter-spacing:-0.111px;">PL-PROJ...<span style="margin-left:3.11px">Einführung von PLANTA Project</span></div>
<div class="r" style="left:333.14px;top:566.35px;width:228.96px;height:11.60px;background:#0876ae;"></div>
<svg class="r" style="left:333.14px;top:566.35px" width="228.96" height="5"><defs><pattern id="p3" x="-0.3" y="0" width="5.4" height="5" patternUnits="userSpaceOnUse"><path d="M2.6 0.6 L4.4 2.4 L2.6 4.2 L0.8 2.4 Z" fill="rgba(112,178,240,0.85)"/></pattern></defs><rect width="100%" height="5" fill="url(#p3)"/></svg>
<svg class="r" style="left:328.84px;top:566.15px" width="9" height="8" viewBox="0 0 9 8"><path d="M0.7 0.6 H8.3 L4.5 7.0 Z" fill="#18b0f4" stroke="#2f4256" stroke-width="0.9" stroke-linejoin="round"/></svg>
<div class="t" style="left:569.50px;top:565.65px;font-size:10px;line-height:14px;color:#1a1a1a;letter-spacing:-0.089px;">PL-POR...<span style="margin-left:5.09px">PLANTA Portfolio einführen</span></div>
<div class="r" style="left:38.30px;top:580.80px;width:361.80px;height:11.60px;background:#0a4874;"></div>
<div class="r" style="left:38.30px;top:580.80px;width:63.70px;height:11.6px;background:repeating-linear-gradient(135deg, #0a4874 0, #0a4874 2.65px, #f4f7fa 2.65px, #f4f7fa 3.4px);"></div>
<svg class="r" style="left:38.30px;top:580.80px" width="361.80" height="5"><defs><pattern id="p4" x="0.8" y="0" width="5.4" height="5" patternUnits="userSpaceOnUse"><path d="M2.6 0.6 L4.4 2.4 L2.6 4.2 L0.8 2.4 Z" fill="rgba(112,178,240,0.85)"/></pattern></defs><rect width="100%" height="5" fill="url(#p4)"/></svg>
<svg class="r" style="left:46px;top:583.80px" width="11" height="7" viewBox="0 0 11 7"><path d="M4 0.4 L1.2 3.2 L4 6 M9.2 0.4 L6.4 3.2 L9.2 6" fill="none" stroke="#081c38" stroke-width="2"/></svg>
<svg class="r" style="left:38.80px;top:583.80px" width="3" height="8" viewBox="0 0 3 8"><path d="M0 1.5 L1.6 0 V3 Z M0 6 L1.6 4.5 V7.5 Z" fill="#e8eef4"/></svg>
<svg class="r" style="left:393.80px;top:580.60px" width="9" height="8" viewBox="0 0 9 8"><path d="M0.7 0.6 H8.3 L4.5 7.0 Z" fill="#18b0f4" stroke="#2f4256" stroke-width="0.9" stroke-linejoin="round"/></svg>
<div class="t" style="left:427.00px;top:580.10px;font-size:10px;line-height:14px;color:#1a1a1a;letter-spacing:0.122px;">7000<span style="margin-left:2.88px">Neues Vertriebsystem</span></div>
<div class="r" style="left:244.97px;top:595.25px;width:356.23px;height:11.60px;background:#00a699;"></div>
<svg class="r" style="left:244.97px;top:595.25px" width="356.23" height="5"><defs><pattern id="p5" x="-0.3" y="0" width="5.4" height="5" patternUnits="userSpaceOnUse"><path d="M2.6 0.6 L4.4 2.4 L2.6 4.2 L0.8 2.4 Z" fill="rgba(84,146,208,0.92)"/></pattern></defs><rect width="100%" height="5" fill="url(#p5)"/></svg>
<svg class="r" style="left:240.87px;top:595.05px" width="9" height="8" viewBox="0 0 9 8"><path d="M0.7 0.6 H8.3 L4.5 7.0 Z" fill="#18b0f4" stroke="#2f4256" stroke-width="0.9" stroke-linejoin="round"/></svg>
<svg class="r" style="left:595.86px;top:595.05px" width="9" height="8" viewBox="0 0 9 8"><path d="M0.7 0.6 H8.3 L4.5 7.0 Z" fill="#18b0f4" stroke="#2f4256" stroke-width="0.9" stroke-linejoin="round"/></svg>
<div class="t" style="left:628.70px;top:594.55px;font-size:10px;line-height:14px;color:#1a1a1a;letter-spacing:-0.168px;">8000<span style="margin-left:3.17px">Neues BDE-System</span></div>
<div class="r" style="left:38.30px;top:609.70px;width:59.80px;height:11.60px;background:#00a699;"></div>
<svg class="r" style="left:38.30px;top:609.70px" width="59.80" height="5"><defs><pattern id="p6" x="0.8" y="0" width="5.4" height="5" patternUnits="userSpaceOnUse"><path d="M2.6 0.6 L4.4 2.4 L2.6 4.2 L0.8 2.4 Z" fill="rgba(84,146,208,0.92)"/></pattern></defs><rect width="100%" height="5" fill="url(#p6)"/></svg>
<svg class="r" style="left:46px;top:612.70px" width="11" height="7" viewBox="0 0 11 7"><path d="M4 0.4 L1.2 3.2 L4 6 M9.2 0.4 L6.4 3.2 L9.2 6" fill="none" stroke="#0a6b62" stroke-width="2"/></svg>
<svg class="r" style="left:38.80px;top:612.70px" width="3" height="8" viewBox="0 0 3 8"><path d="M0 1.5 L1.6 0 V3 Z M0 6 L1.6 4.5 V7.5 Z" fill="#e8eef4"/></svg>
<svg class="r" style="left:96.85px;top:609.50px" width="9" height="8" viewBox="0 0 9 8"><path d="M0.7 0.6 H8.3 L4.5 7.0 Z" fill="#18b0f4" stroke="#2f4256" stroke-width="0.9" stroke-linejoin="round"/></svg>
<div class="t" style="left:125.80px;top:609.00px;font-size:10px;line-height:14px;color:#1a1a1a;letter-spacing:-0.204px;">E001<span style="margin-left:3.20px">Neues CRM-System</span></div>
<div class="r" style="left:61.42px;top:624.15px;width:621.48px;height:11.60px;background:#00a699;"></div>
<svg class="r" style="left:61.42px;top:624.15px" width="621.48" height="5"><defs><pattern id="p7" x="-0.3" y="0" width="5.4" height="5" patternUnits="userSpaceOnUse"><path d="M2.6 0.6 L4.4 2.4 L2.6 4.2 L0.8 2.4 Z" fill="rgba(84,146,208,0.92)"/></pattern></defs><rect width="100%" height="5" fill="url(#p7)"/></svg>
<svg class="r" style="left:57.02px;top:623.95px" width="9" height="8" viewBox="0 0 9 8"><path d="M0.7 0.6 H8.3 L4.5 7.0 Z" fill="#18b0f4" stroke="#2f4256" stroke-width="0.9" stroke-linejoin="round"/></svg>
<svg class="r" style="left:677.73px;top:623.95px" width="9" height="8" viewBox="0 0 9 8"><path d="M0.7 0.6 H8.3 L4.5 7.0 Z" fill="#18b0f4" stroke="#2f4256" stroke-width="0.9" stroke-linejoin="round"/></svg>
<div class="t" style="left:697.10px;top:623.45px;font-size:10px;line-height:14px;color:#1a1a1a;letter-spacing:0.203px;">L1-JJJJ<span style="margin-left:2.80px">Linientätigkeiten JJJJ</span></div>
<div class="r" style="left:321.23px;top:638.60px;width:104.17px;height:11.60px;background:#80d3b8;"></div>
<svg class="r" style="left:321.23px;top:638.60px" width="104.17" height="5"><defs><pattern id="p8" x="-0.3" y="0" width="5.4" height="5" patternUnits="userSpaceOnUse"><path d="M2.6 0.6 L4.4 2.4 L2.6 4.2 L0.8 2.4 Z" fill="rgba(84,146,208,0.92)"/></pattern></defs><rect width="100%" height="5" fill="url(#p8)"/></svg>
<svg class="r" style="left:317.13px;top:638.40px" width="9" height="8" viewBox="0 0 9 8"><path d="M0.7 0.6 H8.3 L4.5 7.0 Z" fill="#18b0f4" stroke="#2f4256" stroke-width="0.9" stroke-linejoin="round"/></svg>
<div class="t" style="left:452.60px;top:637.90px;font-size:10px;line-height:14px;color:#1a1a1a;letter-spacing:0.034px;">0018<span style="margin-left:2.97px">New storage area network system (SAN)</span></div>
<div class="r" style="left:178.81px;top:653.05px;width:92.69px;height:11.60px;background:#80d3b8;"></div>
<svg class="r" style="left:178.81px;top:653.05px" width="92.69" height="5"><defs><pattern id="p9" x="-0.3" y="0" width="5.4" height="5" patternUnits="userSpaceOnUse"><path d="M2.6 0.6 L4.4 2.4 L2.6 4.2 L0.8 2.4 Z" fill="rgba(84,146,208,0.92)"/></pattern></defs><rect width="100%" height="5" fill="url(#p9)"/></svg>
<svg class="r" style="left:174.31px;top:652.85px" width="9" height="8" viewBox="0 0 9 8"><path d="M0.7 0.6 H8.3 L4.5 7.0 Z" fill="#18b0f4" stroke="#2f4256" stroke-width="0.9" stroke-linejoin="round"/></svg>
<div class="t" style="left:299.00px;top:652.35px;font-size:10px;line-height:14px;color:#1a1a1a;letter-spacing:0.043px;">0005<span style="margin-left:2.96px">New server farm</span></div>
<div class="r" style="left:160.10px;top:667.50px;width:190.80px;height:11.60px;background:#80d3b8;"></div>
<svg class="r" style="left:160.10px;top:667.50px" width="190.80" height="5"><defs><pattern id="p10" x="-0.3" y="0" width="5.4" height="5" patternUnits="userSpaceOnUse"><path d="M2.6 0.6 L4.4 2.4 L2.6 4.2 L0.8 2.4 Z" fill="rgba(84,146,208,0.92)"/></pattern></defs><rect width="100%" height="5" fill="url(#p10)"/></svg>
<svg class="r" style="left:155.60px;top:667.30px" width="9" height="8" viewBox="0 0 9 8"><path d="M0.7 0.6 H8.3 L4.5 7.0 Z" fill="#18b0f4" stroke="#2f4256" stroke-width="0.9" stroke-linejoin="round"/></svg>
<div class="t" style="left:378.40px;top:666.80px;font-size:10px;line-height:14px;color:#1a1a1a;letter-spacing:0.063px;">0008<span style="margin-left:2.94px">Neues Zugangskontrollsystem</span></div>
<div class="r" style="left:345.55px;top:681.95px;width:127.25px;height:11.60px;background:#f09428;"></div>
<svg class="r" style="left:345.55px;top:681.95px" width="127.25" height="5"><defs><pattern id="p11" x="-0.3" y="0" width="5.4" height="5" patternUnits="userSpaceOnUse"><path d="M2.6 0.6 L4.4 2.4 L2.6 4.2 L0.8 2.4 Z" fill="rgba(150,180,215,0.9)"/></pattern></defs><rect width="100%" height="5" fill="url(#p11)"/></svg>
<svg class="r" style="left:341.05px;top:681.75px" width="9" height="8" viewBox="0 0 9 8"><path d="M0.7 0.6 H8.3 L4.5 7.0 Z" fill="#18b0f4" stroke="#2f4256" stroke-width="0.9" stroke-linejoin="round"/></svg>
<div class="t" style="left:489.70px;top:681.25px;font-size:10px;line-height:14px;color:#1a1a1a;letter-spacing:0.058px;">000000<span style="margin-left:2.94px">IT Project</span></div>
<div class="r" style="left:199.23px;top:696.40px;width:307.87px;height:11.60px;background:#80d3b8;"></div>
<svg class="r" style="left:194.73px;top:696.20px" width="9" height="8" viewBox="0 0 9 8"><path d="M0.7 0.6 H8.3 L4.5 7.0 Z" fill="#18b0f4" stroke="#2f4256" stroke-width="0.9" stroke-linejoin="round"/></svg>
<svg class="r" style="left:502.08px;top:696.20px" width="9" height="8" viewBox="0 0 9 8"><path d="M0.7 0.6 H8.3 L4.5 7.0 Z" fill="#18b0f4" stroke="#2f4256" stroke-width="0.9" stroke-linejoin="round"/></svg>
<div class="t" style="left:534.80px;top:695.70px;font-size:10px;line-height:14px;color:#1a1a1a;letter-spacing:-0.021px;">0001<span style="margin-left:3.02px">Request-Mgt-System</span></div>
<div class="r" style="left:202.63px;top:710.85px;width:54.87px;height:11.60px;background:#80d3b8;"></div>
<svg class="r" style="left:198.13px;top:710.65px" width="9" height="8" viewBox="0 0 9 8"><path d="M0.7 0.6 H8.3 L4.5 7.0 Z" fill="#18b0f4" stroke="#2f4256" stroke-width="0.9" stroke-linejoin="round"/></svg>
<svg class="r" style="left:252.58px;top:710.65px" width="9" height="8" viewBox="0 0 9 8"><path d="M0.7 0.6 H8.3 L4.5 7.0 Z" fill="#18b0f4" stroke="#2f4256" stroke-width="0.9" stroke-linejoin="round"/></svg>
<div class="t" style="left:284.00px;top:710.15px;font-size:10px;line-height:14px;color:#1a1a1a;letter-spacing:0.117px;">0002<span style="margin-left:2.88px">Internet-Telefonie</span></div>
<div class="r" style="left:112.46px;top:725.30px;width:104.14px;height:11.60px;background:#80d3b8;"></div>
<svg class="r" style="left:107.96px;top:725.10px" width="9" height="8" viewBox="0 0 9 8"><path d="M0.7 0.6 H8.3 L4.5 7.0 Z" fill="#18b0f4" stroke="#2f4256" stroke-width="0.9" stroke-linejoin="round"/></svg>
<svg class="r" style="left:211.75px;top:725.10px" width="9" height="8" viewBox="0 0 9 8"><path d="M0.7 0.6 H8.3 L4.5 7.0 Z" fill="#18b0f4" stroke="#2f4256" stroke-width="0.9" stroke-linejoin="round"/></svg>
<div class="t" style="left:243.50px;top:724.60px;font-size:10px;line-height:14px;color:#1a1a1a;letter-spacing:0.173px;">0015<span style="margin-left:2.83px">Neuer Auftritt auf Messen</span></div>
<div class="r" style="left:91.54px;top:520.80px;width:0;height:215.20px;border-left:1px dotted rgba(84,94,140,0.5);"></div>
<div class="r" style="left:140.88px;top:520.80px;width:0;height:215.20px;border-left:1px dotted rgba(84,94,140,0.5);"></div>
<div class="r" style="left:193.63px;top:520.80px;width:0;height:215.20px;border-left:1px dotted rgba(84,94,140,0.5);"></div>
<div class="r" style="left:244.67px;top:520.80px;width:0;height:215.20px;border-left:1px dotted rgba(84,94,140,0.5);"></div>
<div class="r" style="left:297.41px;top:520.80px;width:0;height:215.20px;border-left:1px dotted rgba(84,94,140,0.5);"></div>
<div class="r" style="left:348.45px;top:520.80px;width:0;height:215.20px;border-left:1px dotted rgba(84,94,140,0.5);"></div>
<div class="r" style="left:401.20px;top:520.80px;width:0;height:215.20px;border-left:1px dotted rgba(84,94,140,0.5);"></div>
<div class="r" style="left:453.94px;top:520.80px;width:0;height:215.20px;border-left:1px dotted rgba(84,94,140,0.5);"></div>
<div class="r" style="left:504.98px;top:520.80px;width:0;height:215.20px;border-left:1px dotted rgba(84,94,140,0.5);"></div>
<div class="r" style="left:557.73px;top:520.80px;width:0;height:215.20px;border-left:1px dotted rgba(84,94,140,0.5);"></div>
<div class="r" style="left:608.77px;top:520.80px;width:0;height:215.20px;border-left:1px dotted rgba(84,94,140,0.5);"></div>
<div class="r" style="left:661.51px;top:520.80px;width:1.00px;height:215.20px;background:#7886a8;"></div>
<div class="r" style="left:714.26px;top:520.80px;width:0;height:215.20px;border-left:1px dotted rgba(84,94,140,0.5);"></div>
<div class="r" style="left:761.89px;top:520.80px;width:0;height:215.20px;border-left:1px dotted rgba(84,94,140,0.5);"></div>
<div class="r" style="left:814.64px;top:520.80px;width:0;height:215.20px;border-left:1px dotted rgba(84,94,140,0.5);"></div>
<div class="r" style="left:865.68px;top:520.80px;width:0;height:215.20px;border-left:1px dotted rgba(84,94,140,0.5);"></div>
<div class="r" style="left:309.02px;top:519.30px;width:1.00px;height:217.70px;background:#9c3b3f;"></div>
<div class="r" style="left:337.10px;top:678.00px;width:243.40px;height:18.40px;background:transparent;border:2px solid #f40a0a;box-sizing:border-box;"></div>
</body></html>
